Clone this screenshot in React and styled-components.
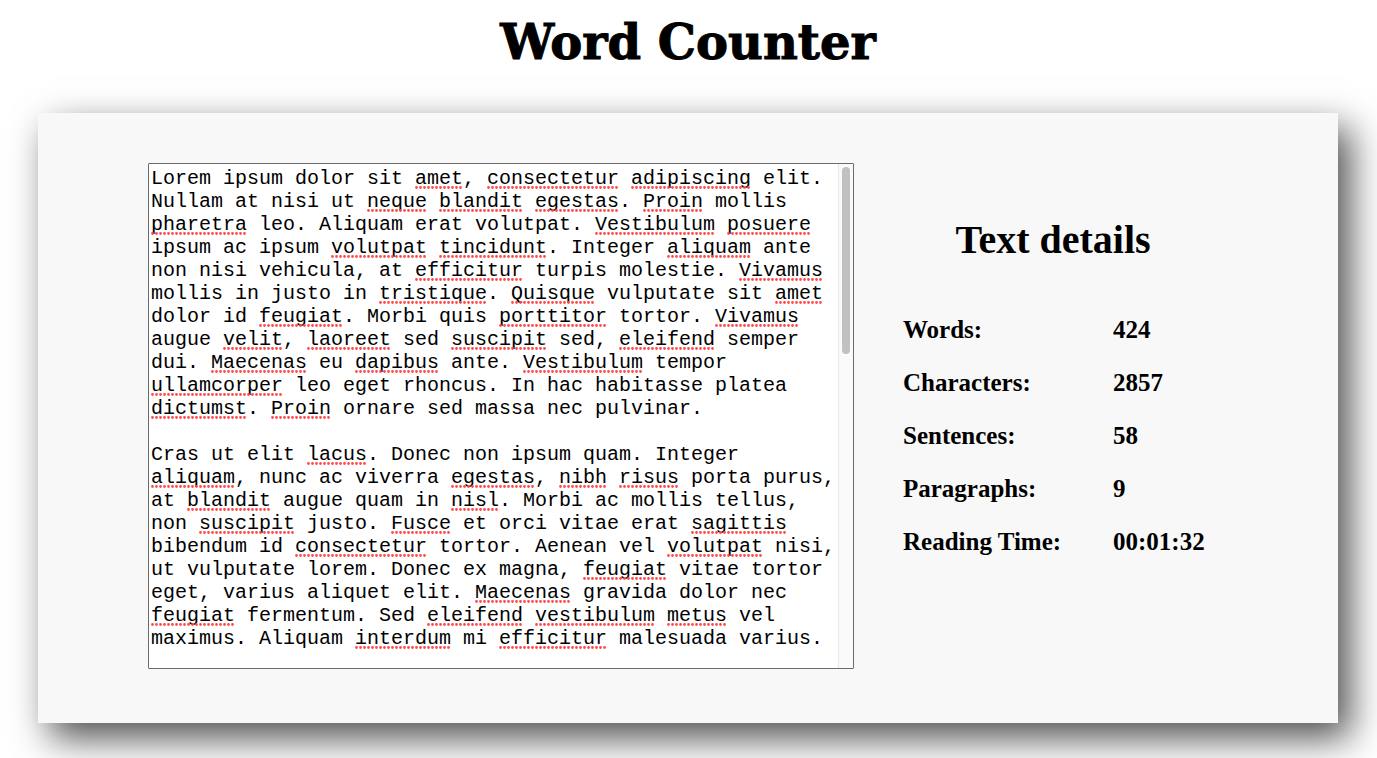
import React, { useState } from "react";
import styled, { createGlobalStyle } from "styled-components";

const CHAR_WIDTH = 12;
const LINE_HEIGHT = 23;

const GlobalStyle = createGlobalStyle`
  * { box-sizing: border-box; }
  body {
    margin: 0;
    background: #fff;
    color: #000;
    font-family: "Liberation Serif", "Times New Roman", serif;
  }
`;

const Page = styled.main`
  display: flex;
  flex-direction: column;
  padding: 10px 39px 35px 38px;
  overflow: hidden;
`;

const Title = styled.h1`
  margin: 0 0 39px;
  text-align: center;
  font-family: "DejaVu Serif", serif;
  font-size: 48px;
  line-height: 64px;
  font-weight: 700;
  -webkit-text-stroke: 1px #000;
`;

const Card = styled.section`
  display: flex;
  align-items: flex-start;
  gap: 49px;
  padding: 50px 110px 54px;
  background: #f8f8f8;
  box-shadow: 12px 15px 35px rgba(0, 0, 0, 0.69);
`;

const Editor = styled.div`
  flex: 1;
  min-width: 0;
  display: flex;
  height: 506px;
  border: 1px solid #6b6b6b;
  border-radius: 1px;
  background: #fff;
`;

const Writing = styled.div`
  flex: 1;
  min-width: 0;
  display: grid;
  overflow: hidden;

  > * { grid-area: 1 / 1; }
`;

const TextBox = styled.textarea`
  display: block;
  width: 100%;
  height: 100%;
  margin: 0;
  padding: 3px 0 2px 2px;
  border: 0;
  outline: 0;
  resize: none;
  background: transparent;
  color: #000;
  font-family: "Courier New", "Liberation Mono", monospace;
  font-size: 20px;
  line-height: ${LINE_HEIGHT}px;
  overflow: hidden;
`;

const SpellingMarks = styled.svg`
  display: block;
  width: 100%;
  height: 100%;
  padding: 2px 0 0 2px;
  pointer-events: none;
`;

const ScrollTrack = styled.div`
  width: 15px;
  padding: 3px;
  border-left: 1px solid #e8e8e8;
  background: #fafafa;
`;

const ScrollThumb = styled.div`
  width: 8px;
  height: 187px;
  border-radius: 4px;
  background: #c1c1c1;
`;

const Details = styled.aside`
  width: 325px;
  flex: none;
  padding: 54px 25px 0 0;
`;

const DetailsTitle = styled.h2`
  margin: 0 0 53px;
  text-align: center;
  font-size: 40px;
  line-height: 46px;
`;

const Stats = styled.dl`
  display: grid;
  grid-template-columns: 210px 1fr;
  row-gap: 25px;
  margin: 0;
  font-size: 25px;
  line-height: 28px;
  font-weight: 700;
  white-space: nowrap;
`;

const Label = styled.dt`
  margin: 0;
`;

const Value = styled.dd`
  margin: 0;
`;

const initialText = `Lorem ipsum dolor sit amet, consectetur adipiscing elit.
Nullam at nisi ut neque blandit egestas. Proin mollis
pharetra leo. Aliquam erat volutpat. Vestibulum posuere
ipsum ac ipsum volutpat tincidunt. Integer aliquam ante
non nisi vehicula, at efficitur turpis molestie. Vivamus
mollis in justo in tristique. Quisque vulputate sit amet
dolor id feugiat. Morbi quis porttitor tortor. Vivamus
augue velit, laoreet sed suscipit sed, eleifend semper
dui. Maecenas eu dapibus ante. Vestibulum tempor
ullamcorper leo eget rhoncus. In hac habitasse platea
dictumst. Proin ornare sed massa nec pulvinar.

Cras ut elit lacus. Donec non ipsum quam. Integer
aliquam, nunc ac viverra egestas, nibh risus porta purus,
at blandit augue quam in nisl. Morbi ac mollis tellus,
non suscipit justo. Fusce et orci vitae erat sagittis
bibendum id consectetur tortor. Aenean vel volutpat nisi,
ut vulputate lorem. Donec ex magna, feugiat vitae tortor
eget, varius aliquet elit. Maecenas gravida dolor nec
feugiat fermentum. Sed eleifend vestibulum metus vel
maximus. Aliquam interdum mi efficitur malesuada varius.`;

const unknownWords =
  /\b(amet|consectetur|adipiscing|neque|blandit|egestas|Proin|pharetra|Vestibulum|posuere|volutpat|tincidunt|aliquam|efficitur|Vivamus|tristique|Quisque|feugiat|porttitor|velit|laoreet|suscipit|eleifend|Maecenas|dapibus|ullamcorper|dictumst|lacus|nibh|risus|nisl|Fusce|sagittis|vestibulum|metus|interdum)\b/g;

function findMarks(text) {
  return text.split("\n").flatMap((line, row) =>
    [...line.matchAll(unknownWords)]
      .filter((m) => !(m[0] === "volutpat" && row === 2))
      .map((m) => ({ row, column: m.index, length: m[0].length }))
  );
}

const stats = [
  ["Words:", "424"],
  ["Characters:", "2857"],
  ["Sentences:", "58"],
  ["Paragraphs:", "9"],
  ["Reading Time:", "00:01:32"],
];

export default function App() {
  const [text, setText] = useState(initialText);

  return (
    <>
      <GlobalStyle />
      <Page>
        <Title>Word Counter</Title>
        <Card>
          <Editor>
            <Writing>
              <TextBox
                aria-label="Text to count"
                wrap="soft"
                spellCheck={false}
                value={text}
                onChange={(e) => setText(e.target.value)}
              />
              <SpellingMarks aria-hidden="true">
                {findMarks(text).map(({ row, column, length }) => (
                  <line
                    key={`${row}-${column}`}
                    x1={column * CHAR_WIDTH + 1.5}
                    x2={(column + length) * CHAR_WIDTH - 1}
                    y1={row * LINE_HEIGHT + 21.5}
                    y2={row * LINE_HEIGHT + 21.5}
                    stroke="#ff4a4a"
                    strokeWidth="2.8"
                    strokeLinecap="round"
                    strokeDasharray="0 4"
                  />
                ))}
              </SpellingMarks>
            </Writing>
            <ScrollTrack>
              <ScrollThumb />
            </ScrollTrack>
          </Editor>
          <Details>
            <DetailsTitle>Text details</DetailsTitle>
            <Stats>
              {stats.map(([label, value]) => (
                <React.Fragment key={label}>
                  <Label>{label}</Label>
                  <Value>{value}</Value>
                </React.Fragment>
              ))}
            </Stats>
          </Details>
        </Card>
      </Page>
    </>
  );
}
